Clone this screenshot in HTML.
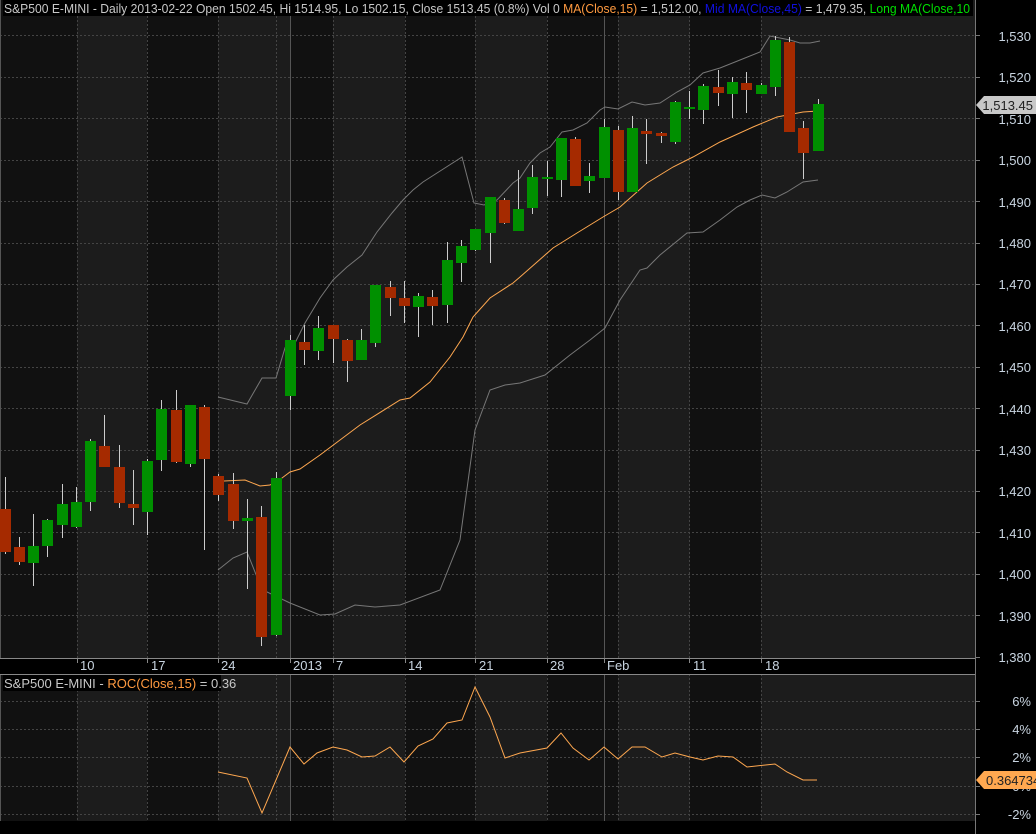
<!DOCTYPE html>
<html><head><meta charset="utf-8"><style>
html,body{margin:0;padding:0;background:#000;width:1036px;height:834px;overflow:hidden}
svg{display:block;font-family:"Liberation Sans",sans-serif}
</style></head><body>
<svg width="1036" height="834" viewBox="0 0 1036 834" xmlns="http://www.w3.org/2000/svg">
<rect width="1036" height="834" fill="#000"/>
<!-- shading main -->
<g>
<rect x="0" y="0" width="975" height="658" fill="#111"/>
<rect x="0" y="674" width="975" height="147" fill="#111"/>
<g fill="#1c1c1c">
<rect x="77" y="0" width="70" height="658"/><rect x="218" y="0" width="72" height="658"/><rect x="333" y="0" width="72" height="658"/><rect x="475" y="0" width="72" height="658"/><rect x="618" y="0" width="72" height="658"/><rect x="761" y="0" width="214" height="658"/>
<rect x="77" y="674" width="70" height="147"/><rect x="218" y="674" width="72" height="147"/><rect x="333" y="674" width="72" height="147"/><rect x="475" y="674" width="72" height="147"/><rect x="618" y="674" width="72" height="147"/><rect x="761" y="674" width="214" height="147"/>
</g>
</g>
<!-- grid -->
<g stroke="#444" stroke-width="1" stroke-dasharray="2,2">
<path d="M0 35.5H975M0 77.5H975M0 118.5H975M0 160.5H975M0 201.5H975M0 243.5H975M0 284.5H975M0 325.5H975M0 367.5H975M0 408.5H975M0 450.5H975M0 491.5H975M0 532.5H975M0 574.5H975M0 615.5H975"/>
<path d="M0 701.5H975M0 729.5H975M0 757.5H975M0 786.5H975M0 814.5H975"/>
<path d="M77.5 0V658M147.5 0V658M218.5 0V658M276.5 0V658M333.5 0V658M405.5 0V658M475.5 0V658M547.5 0V658M618.5 0V658M689.5 0V658M761.5 0V658"/>
<path d="M77.5 674V821M147.5 674V821M218.5 674V821M276.5 674V821M333.5 674V821M405.5 674V821M475.5 674V821M547.5 674V821M618.5 674V821M689.5 674V821M761.5 674V821"/>
</g>
<g stroke="#555"><path d="M290.5 0V658M604.5 0V658M290.5 674V821M604.5 674V821"/><path d="M0.5 0V821"/></g>
<!-- bands -->
<g fill="none" stroke="#777" stroke-width="1">
<polyline points="218,397 247,404 262,378 276,378 285,348 290,353 305,323 320,298 333,280 347,267 362,255 377,232 392,213 403,200 413,190 423,182 462,157 474,203 484,205 497,200 513,183 520,178 530,163 540,153 550,147 562,132 573,130 587,123 600,110 605,107 618,109 632,102 645,105 660,103 677,92 690,85 703,73 720,68 740,60 760,52 770,36 790,40 800,43 810,43 820,41"/>
<polyline points="218,570 233,558 247,552 257,577 267,592 290,603 320,615 335,614 355,605 375,607 400,605 440,590 460,540 475,430 490,390 505,385 520,383 545,375 570,355 590,340 605,328 620,300 640,270 647,268 660,255 687,233 703,232 720,220 737,207 750,200 762,195 775,198 787,192 803,182 818,180"/>
</g>
<polyline fill="none" stroke="#ffa850" stroke-width="1" points="218,480 224,481 245,480 260,486 270,485 282,478 290,472 300,469 320,455 360,425 400,400 410,398 430,382 450,357 463,337 473,317 490,298 513,283 520,277 553,248 577,233 603,217 620,207 647,183 673,167 693,157 720,142 753,127 777,117 803,112 818,111"/>
<!-- candles -->
<g id="c"></g>
<g>
<g fill="#ccc">
<rect x="5" y="477" width="1" height="77"/><rect x="19" y="537" width="1" height="28"/><rect x="33" y="514" width="1" height="72"/><rect x="47" y="519" width="1" height="38"/><rect x="62" y="484" width="1" height="54"/><rect x="76" y="487" width="1" height="41"/><rect x="90" y="439" width="1" height="72"/><rect x="104" y="415" width="1" height="52"/><rect x="119" y="445" width="1" height="63"/><rect x="133" y="470" width="1" height="55"/><rect x="147" y="459" width="1" height="76"/><rect x="161" y="400" width="1" height="71"/><rect x="176" y="390" width="1" height="73"/><rect x="190" y="405" width="1" height="62"/><rect x="204" y="405" width="1" height="145"/><rect x="218" y="474" width="1" height="27"/><rect x="233" y="473" width="1" height="56"/><rect x="247" y="499" width="1" height="90"/><rect x="261" y="506" width="1" height="140"/><rect x="276" y="472" width="1" height="164"/><rect x="290" y="335" width="1" height="75"/><rect x="304" y="325" width="1" height="40"/><rect x="318" y="316" width="1" height="44"/><rect x="333" y="325" width="1" height="38"/><rect x="347" y="339" width="1" height="43"/><rect x="361" y="329" width="1" height="31"/><rect x="375" y="285" width="1" height="62"/><rect x="390" y="281" width="1" height="35"/><rect x="404" y="281" width="1" height="42"/><rect x="418" y="293" width="1" height="44"/><rect x="432" y="290" width="1" height="35"/><rect x="447" y="242" width="1" height="81"/><rect x="461" y="240" width="1" height="42"/><rect x="475" y="229" width="1" height="22"/><rect x="490" y="197" width="1" height="66"/><rect x="504" y="198" width="1" height="26"/><rect x="518" y="170" width="1" height="61"/><rect x="532" y="165" width="1" height="49"/><rect x="547" y="161" width="1" height="35"/><rect x="561" y="138" width="1" height="59"/><rect x="575" y="137" width="1" height="49"/><rect x="589" y="163" width="1" height="30"/><rect x="604" y="119" width="1" height="59"/><rect x="618" y="126" width="1" height="74"/><rect x="632" y="116" width="1" height="76"/><rect x="646" y="119" width="1" height="45"/><rect x="661" y="132" width="1" height="11"/><rect x="675" y="101" width="1" height="43"/><rect x="689" y="91" width="1" height="28"/><rect x="703" y="84" width="1" height="40"/><rect x="718" y="70" width="1" height="36"/><rect x="732" y="77" width="1" height="41"/><rect x="746" y="72" width="1" height="41"/><rect x="761" y="83" width="1" height="11"/><rect x="775" y="36" width="1" height="60"/><rect x="789" y="37" width="1" height="95"/><rect x="803" y="121" width="1" height="58"/><rect x="818" y="99" width="1" height="52"/>
</g>
<g fill="#a52a00">
<rect x="0" y="509" width="11" height="43"/><rect x="14" y="547" width="11" height="15"/><rect x="99" y="446" width="11" height="21"/><rect x="114" y="467" width="11" height="36"/><rect x="128" y="504" width="11" height="4"/><rect x="171" y="410" width="11" height="52"/><rect x="199" y="407" width="11" height="52"/><rect x="213" y="476" width="11" height="19"/><rect x="228" y="484" width="11" height="37"/><rect x="256" y="517" width="11" height="120"/><rect x="299" y="342" width="11" height="8"/><rect x="328" y="325" width="11" height="14"/><rect x="342" y="340" width="11" height="21"/><rect x="385" y="287" width="11" height="11"/><rect x="399" y="298" width="11" height="8"/><rect x="427" y="297" width="11" height="9"/><rect x="499" y="200" width="11" height="23"/><rect x="570" y="139" width="11" height="47"/><rect x="613" y="130" width="11" height="62"/><rect x="641" y="131" width="11" height="3"/><rect x="656" y="133" width="11" height="3"/><rect x="713" y="87" width="11" height="6"/><rect x="741" y="83" width="11" height="7"/><rect x="784" y="42" width="11" height="90"/><rect x="798" y="128" width="11" height="25"/>
</g>
<g fill="#009000">
<rect x="28" y="546" width="11" height="17"/><rect x="42" y="520" width="11" height="26"/><rect x="57" y="504" width="11" height="21"/><rect x="71" y="502" width="11" height="25"/><rect x="85" y="441" width="11" height="61"/><rect x="142" y="461" width="11" height="51"/><rect x="156" y="409" width="11" height="51"/><rect x="185" y="405" width="11" height="59"/><rect x="242" y="518" width="11" height="3"/><rect x="271" y="478" width="11" height="157"/><rect x="285" y="340" width="11" height="56"/><rect x="313" y="328" width="11" height="23"/><rect x="356" y="340" width="11" height="20"/><rect x="370" y="285" width="11" height="58"/><rect x="413" y="296" width="11" height="11"/><rect x="442" y="260" width="11" height="45"/><rect x="456" y="246" width="11" height="17"/><rect x="470" y="229" width="11" height="21"/><rect x="485" y="197" width="11" height="36"/><rect x="513" y="209" width="11" height="22"/><rect x="527" y="177" width="11" height="31"/><rect x="542" y="177" width="11" height="2"/><rect x="556" y="138" width="11" height="42"/><rect x="584" y="176" width="11" height="5"/><rect x="599" y="127" width="11" height="51"/><rect x="627" y="128" width="11" height="64"/><rect x="670" y="102" width="11" height="40"/><rect x="684" y="107" width="11" height="2"/><rect x="698" y="86" width="11" height="24"/><rect x="727" y="82" width="11" height="12"/><rect x="756" y="85" width="11" height="9"/><rect x="770" y="40" width="11" height="47"/><rect x="813" y="104" width="11" height="47"/>
</g>
</g>
<!-- title -->
<rect x="3" y="0" width="970" height="16" fill="#000"/>
<text x="4" y="13" font-size="13" fill="#c8c8c8" textLength="966" lengthAdjust="spacingAndGlyphs">S&amp;P500 E-MINI - Daily 2013-02-22 Open 1502.45, Hi 1514.95, Lo 1502.15, Close 1513.45 (0.8%) Vol 0 <tspan fill="#ff9a40">MA(Close,15)</tspan> = 1,512.00, <tspan fill="#1010e0">Mid MA(Close,45)</tspan> = 1,479.35, <tspan fill="#00e000">Long MA(Close,10</tspan></text>
<!-- right axis -->
<path d="M975.5 0V834" stroke="#777"/>
<g stroke="#777"><path d="M975 35.5h5M975 77.5h5M975 118.5h5M975 160.5h5M975 201.5h5M975 243.5h5M975 284.5h5M975 325.5h5M975 367.5h5M975 408.5h5M975 450.5h5M975 491.5h5M975 532.5h5M975 574.5h5M975 615.5h5M975 657.5h5M975 701.5h5M975 729.5h5M975 757.5h5M975 786.5h5M975 814.5h5"/></g>
<g font-size="13" fill="#c8d4e0" text-anchor="end">
<text x="1031" y="41">1,530</text><text x="1031" y="82">1,520</text><text x="1031" y="124">1,510</text><text x="1031" y="165">1,500</text><text x="1031" y="207">1,490</text><text x="1031" y="248">1,480</text><text x="1031" y="289">1,470</text><text x="1031" y="331">1,460</text><text x="1031" y="372">1,450</text><text x="1031" y="414">1,440</text><text x="1031" y="455">1,430</text><text x="1031" y="496">1,420</text><text x="1031" y="538">1,410</text><text x="1031" y="579">1,400</text><text x="1031" y="621">1,390</text><text x="1031" y="662">1,380</text>
<text x="1031" y="706">6%</text><text x="1031" y="734">4%</text><text x="1031" y="762">2%</text><text x="1031" y="791">0%</text><text x="1031" y="819">-2%</text>
</g>
<path d="M976 105L984 96H1036V114H984Z" fill="#c8c8c8"/>
<text x="1033" y="110" font-size="13" fill="#222" text-anchor="end">1,513.45</text>
<path d="M976 780L984 771H1036V789H984Z" fill="#ffa850"/>
<text x="986" y="785" font-size="13" fill="#222">0.364734</text>
<!-- date axis -->
<rect x="0" y="658" width="975" height="16" fill="#000"/>
<path d="M0 658.5H975M0 674.5H975" stroke="#888"/>
<g stroke="#888"><path d="M77.5 658v5M147.5 658v5M218.5 658v5M290.5 658v5M333.5 658v5M405.5 658v5M475.5 658v5M547.5 658v5M604.5 658v5M689.5 658v5M761.5 658v5"/></g>
<g font-size="13" fill="#c8d4e0">
<text x="80" y="670">10</text><text x="151" y="670">17</text><text x="221" y="670">24</text><text x="293" y="670">2013</text><text x="336" y="670">7</text><text x="408" y="670">14</text><text x="479" y="670">21</text><text x="550" y="670">28</text><text x="607" y="670">Feb</text><text x="693" y="670">11</text><text x="765" y="670">18</text>
</g>
<!-- ROC -->
<rect x="3" y="675" width="218" height="16" fill="#000"/>
<text x="4" y="688" font-size="13" fill="#c8c8c8">S&amp;P500 E-MINI - <tspan fill="#ff9a40">ROC(Close,15)</tspan> = 0.36</text>
<polyline fill="none" stroke="#ffa850" stroke-width="1" points="218,772 247,778 262,813 290,747 304,764 317,753 333,747 347,750 362,757 375,756 390,747 404,762 418,746 433,739 447,723 462,720 475,687 490,717 505,758 520,753 547,748 561,733 573,748 589,760 604,747 618,759 632,747 645,747 662,757 675,753 690,757 703,760 718,756 733,757 747,767 775,764 787,772 803,780 817,780"/>
</svg>
</body></html>
